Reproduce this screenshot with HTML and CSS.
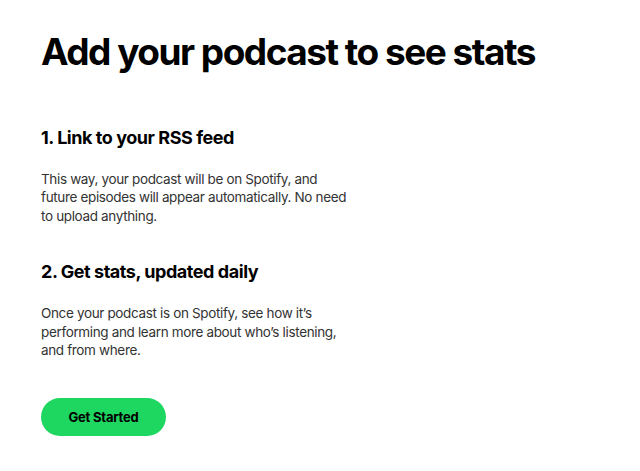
FILE: index.html
```html
<!DOCTYPE html>
<html>
<head>
<meta charset="utf-8">
<link rel="stylesheet" href="styles.css">
</head>
<body>
<main class="page">
  <h1 class="title">Add your podcast to see stats</h1>
  <section class="step">
    <h2 class="step-title">1. Link to your RSS feed</h2>
    <p class="step-text">This way, your podcast will be on Spotify, and future episodes will appear automatically. No need to upload anything.</p>
  </section>
  <section class="step">
    <h2 class="step-title">2. Get stats, updated daily</h2>
    <p class="step-text">Once your podcast is on Spotify, see how it’s performing and learn more about who’s listening, and from where.</p>
  </section>
  <button class="cta">Get Started</button>
</main>
</body>
</html>
```
FILE: styles.css
```css
html, body {
  margin: 0;
  padding: 0;
  background: #ffffff;
}
body {
  font-family: Inter, "Noto Sans", sans-serif;
  color: #000;
}
.page {
  padding: 29.6px 0 0 41px;
  display: flex;
  flex-direction: column;
  align-items: flex-start;
}
.title {
  margin: 0;
  font-size: 37px;
  line-height: 44px;
  font-weight: 700;
  letter-spacing: -1.5px;
}
.step {
  width: 308px;
}
.step-title {
  margin: 52px 0 0;
  font-size: 18px;
  line-height: 24px;
  font-weight: 700;
  letter-spacing: -0.45px;
}
.step + .step .step-title {
  margin-top: 35px;
}
.step-text {
  margin: 20px 0 0;
  font-size: 13.5px;
  line-height: 18.5px;
  letter-spacing: -0.35px;
  color: #333;
}
.cta {
  margin-top: 38px;
  width: 125px;
  height: 38px;
  border: none;
  border-radius: 19px;
  background: #1ed760;
  color: #000;
  font-family: Inter, "Noto Sans", sans-serif;
  font-size: 13px;
  font-weight: 700;
  letter-spacing: -0.2px;
  padding: 0;
}
```
